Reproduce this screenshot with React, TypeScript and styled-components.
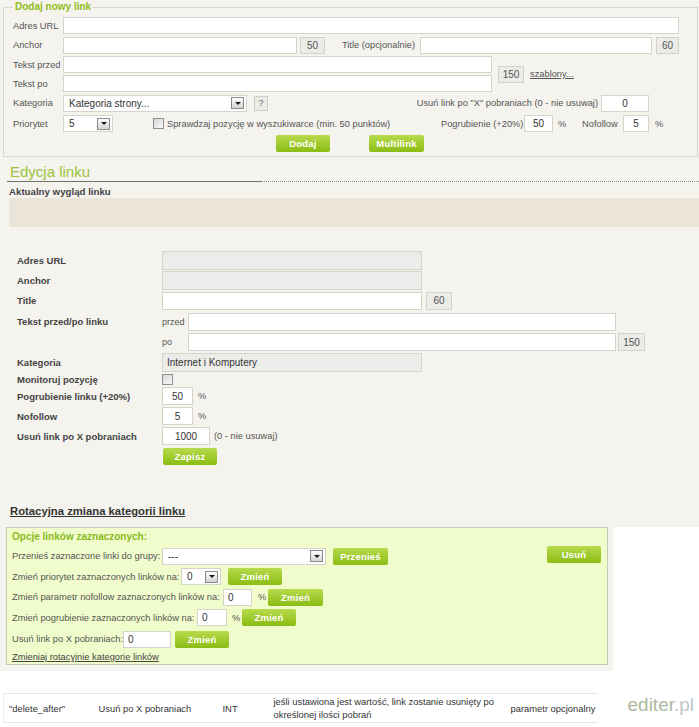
import React from 'react';
import styled, { createGlobalStyle } from 'styled-components';

const FONT = '"Liberation Sans", Arial, Helvetica, sans-serif';

const GlobalStyle = createGlobalStyle`
  * { box-sizing: border-box; }
  html, body { margin: 0; padding: 0; background: #ffffff; }
  body { font-family: ${FONT}; font-size: 9.3px; color: #4a4a4a; }
  input, button { font-family: ${FONT}; }
`;

export default function App() {
  return (
    <Page>
      <GlobalStyle />
      <TopArea>
        <Fieldset>
          <Legend>Dodaj nowy link</Legend>
          <Row $h={19}>
            <FieldLabel>Adres URL</FieldLabel>
            <TextField $w={616} readOnly defaultValue="" />
          </Row>
          <Row $h={20}>
            <FieldLabel>Anchor</FieldLabel>
            <TextField $w={234} readOnly defaultValue="" />
            <Counter $w={25} $ml={3}>50</Counter>
            <TitleLabel>Title (opcjonalnie)</TitleLabel>
            <TextField $w={232} readOnly defaultValue="" />
            <Counter $w={23} $ml={4}>60</Counter>
          </Row>
          <TwinRows>
            <div>
              <Row $h={19}>
                <FieldLabel>Tekst przed</FieldLabel>
                <TextField $w={429} readOnly defaultValue="" />
              </Row>
              <Row $h={19}>
                <FieldLabel>Tekst po</FieldLabel>
                <TextField $w={429} readOnly defaultValue="" />
              </Row>
            </div>
            <Counter $w={26} $ml={6}>150</Counter>
            <TemplatesLink href="#">szablony...</TemplatesLink>
          </TwinRows>
          <Row $h={20}>
            <FieldLabel>Kategoria</FieldLabel>
            <SelectBox $w={184}>
              Kategoria strony...
              <SelectArrow />
            </SelectBox>
            <HelpBox>?</HelpBox>
            <RightText $w={333}>Usuń link po "X" pobraniach (0 - nie usuwaj)</RightText>
            <TextField $w={48} $align="center" readOnly defaultValue="0" />
          </Row>
          <Row $h={21}>
            <FieldLabel>Priorytet</FieldLabel>
            <SelectBox $w={50}>
              5
              <SelectArrow />
            </SelectBox>
            <CheckGroup $w={328}>
              <Checkbox />
              Sprawdzaj pozycję w wyszukiwarce (min. 50 punktów)
            </CheckGroup>
            <FixedText $w={83}>Pogrubienie (+20%)</FixedText>
            <TextField $w={29} $align="center" readOnly defaultValue="50" />
            <FixedText $w={29} $pl={5}>%</FixedText>
            <FixedText $w={41}>Nofollow</FixedText>
            <TextField $w={26} $align="center" readOnly defaultValue="5" />
            <FixedText $w={12} $pl={6}>%</FixedText>
          </Row>
          <Row $h={18} $pl={263}>
            <GreenButton $w={54}>Dodaj</GreenButton>
            <GreenButton $w={55} $ml={39}>Multilink</GreenButton>
          </Row>
        </Fieldset>

        <EditHeading>Edycja linku</EditHeading>
        <HeadingRule />
        <SubHeading>Aktualny wygląd linku</SubHeading>
        <PreviewBox />

        <EditForm>
          <Row $h={20}>
            <FormLabel>Adres URL</FormLabel>
            <TextField $w={260} $h={19} $disabled readOnly defaultValue="" />
          </Row>
          <Row $h={20}>
            <FormLabel>Anchor</FormLabel>
            <TextField $w={260} $h={19} $disabled readOnly defaultValue="" />
          </Row>
          <Row $h={21}>
            <FormLabel>Title</FormLabel>
            <TextField $w={260} $h={18} readOnly defaultValue="" />
            <Counter $w={26} $h={18} $ml={4}>60</Counter>
          </Row>
          <Row $h={21}>
            <FormLabel>Tekst przed/po linku</FormLabel>
            <InlineNote>przed</InlineNote>
            <TextField $w={428} $h={18} readOnly defaultValue="" />
          </Row>
          <Row $h={20}>
            <FormLabel />
            <InlineNote>po</InlineNote>
            <TextField $w={428} $h={18} readOnly defaultValue="" />
            <Counter $w={27} $h={18} $ml={2}>150</Counter>
          </Row>
          <Row $h={20}>
            <FormLabel>Kategoria</FormLabel>
            <TextField $w={260} $h={19} $disabled readOnly defaultValue="Internet i Komputery" />
          </Row>
          <Row $h={14}>
            <FormLabel>Monitoruj pozycję</FormLabel>
            <Checkbox />
          </Row>
          <Row $h={20}>
            <FormLabel>Pogrubienie linku (+20%)</FormLabel>
            <TextField $w={31} $h={18} $align="center" readOnly defaultValue="50" />
            <FixedText $w={14} $pl={5}>%</FixedText>
          </Row>
          <Row $h={20}>
            <FormLabel>Nofollow</FormLabel>
            <TextField $w={31} $h={18} $align="center" readOnly defaultValue="5" />
            <FixedText $w={14} $pl={5}>%</FixedText>
          </Row>
          <Row $h={20}>
            <FormLabel>Usuń link po X pobraniach</FormLabel>
            <TextField $w={48} $h={18} $align="center" readOnly defaultValue="1000" />
            <FixedText $w={80} $pl={4}>(0 - nie usuwaj)</FixedText>
          </Row>
          <Row $h={21} $pl={146}>
            <GreenButton $w={54}>Zapisz</GreenButton>
          </Row>
        </EditForm>

        <RotHeading>Rotacyjna zmiana kategorii linku</RotHeading>
      </TopArea>

      <OptionsArea>
        <OptionsBox>
          <OptionsTitle>Opcje linków zaznaczonych:</OptionsTitle>
          <Row $h={20}>
            <FixedText $w={150}>Przenieś zaznaczone linki do grupy:</FixedText>
            <SelectBox $w={164}>
              ---
              <SelectArrow />
            </SelectBox>
            <GreenButton $w={55} $ml={7}>Przenieś</GreenButton>
            <PushRight>
              <GreenButton $w={54}>Usuń</GreenButton>
            </PushRight>
          </Row>
          <Row $h={21}>
            <FixedText $w={169}>Zmień priorytet zaznaczonych linków na:</FixedText>
            <SelectBox $w={40}>
              0
              <SelectArrow />
            </SelectBox>
            <GreenButton $w={54} $ml={7}>Zmień</GreenButton>
          </Row>
          <Row $h={20}>
            <FixedText $w={211}>Zmień parametr nofollow zaznaczonych linków na:</FixedText>
            <TextField $w={29} readOnly defaultValue="0" />
            <FixedText $w={16} $pl={6}>%</FixedText>
            <GreenButton $w={55}>Zmień</GreenButton>
          </Row>
          <Row $h={21}>
            <FixedText $w={185}>Zmień pogrubienie zaznaczonych linków na:</FixedText>
            <TextField $w={30} readOnly defaultValue="0" />
            <FixedText $w={15} $pl={5}>%</FixedText>
            <GreenButton $w={54}>Zmień</GreenButton>
          </Row>
          <Row $h={22}>
            <FixedText $w={111}>Usuń link po X pobraniach:</FixedText>
            <TextField $w={48} readOnly defaultValue="0" />
            <GreenButton $w={54} $ml={4}>Zmień</GreenButton>
          </Row>
          <Row $h={14}>
            <PlainLink href="#">Zmieniaj rotacyjnie kategorie linków</PlainLink>
          </Row>
        </OptionsBox>
      </OptionsArea>

      <DocArea>
        <DocTable>
          <tbody>
            <tr>
              <DocCell $w={90}>"delete_after"</DocCell>
              <DocCell $w={124}>Usuń po X pobraniach</DocCell>
              <DocCell $w={51}>INT</DocCell>
              <DocCell $w={237}>
                jeśli ustawiona jest wartość, link zostanie usunięty po
                <br />
                określonej ilości pobrań
              </DocCell>
              <DocCell $w={92}>parametr opcjonalny</DocCell>
            </tr>
          </tbody>
        </DocTable>
        <Watermark>
          editer<WatermarkTld>.pl</WatermarkTld>
        </Watermark>
      </DocArea>
    </Page>
  );
}

const Page = styled.div`
  width: 699px;
`;

const TopArea = styled.div`
  background: #f4f3ee;
  padding-bottom: 9px;
  overflow: hidden;
`;

const Fieldset = styled.fieldset`
  margin: 0 1px 0 3px;
  padding: 2px 0 4px 9px;
  border: 1px solid #d8d6cf;
  min-width: 0;
`;

const Legend = styled.legend`
  padding: 0 2px;
  font-size: 10px;
  font-weight: bold;
  line-height: 14px;
  color: #8fbd20;
`;

const Row = styled.div<{ $h: number; $pl?: number }>`
  display: flex;
  align-items: center;
  height: ${p => p.$h}px;
  padding-left: ${p => p.$pl ?? 0}px;
`;

const TwinRows = styled.div`
  display: flex;
  align-items: center;
`;

const FieldLabel = styled.span`
  width: 50px;
  flex: none;
  color: #555;
  white-space: nowrap;
`;

const TitleLabel = styled.span`
  width: 95px;
  flex: none;
  padding-right: 5px;
  text-align: right;
  color: #555;
  white-space: nowrap;
`;

const TextField = styled.input<{
  $w: number;
  $h?: number;
  $align?: 'left' | 'center';
  $disabled?: boolean;
}>`
  width: ${p => p.$w}px;
  height: ${p => p.$h ?? 17}px;
  flex: none;
  margin: 0;
  padding: 0 4px;
  border: 1px solid #d6d3cb;
  background: ${p => (p.$disabled ? '#ececea' : '#ffffff')};
  font-size: 10px;
  color: #333;
  text-align: ${p => p.$align ?? 'left'};
  outline: none;
`;

const Counter = styled.span<{ $w: number; $h?: number; $ml?: number }>`
  display: inline-flex;
  align-items: center;
  justify-content: center;
  width: ${p => p.$w}px;
  height: ${p => p.$h ?? 17}px;
  margin-left: ${p => p.$ml ?? 0}px;
  flex: none;
  background: #ebebe8;
  border: 1px solid #d4d2cb;
  font-size: 10px;
  color: #555;
`;

const TemplatesLink = styled.a`
  margin-left: 6px;
  color: #555;
  text-decoration: underline;
`;

const SelectBox = styled.div<{ $w: number }>`
  display: flex;
  align-items: center;
  width: ${p => p.$w}px;
  height: 17px;
  flex: none;
  padding: 0 2px 0 5px;
  border: 1px solid #d6d3cb;
  background: #ffffff;
  font-size: 10px;
  color: #333;
  white-space: nowrap;
`;

const SelectArrow = styled.span`
  display: flex;
  align-items: center;
  justify-content: center;
  margin-left: auto;
  width: 13px;
  height: 12px;
  flex: none;
  border: 1px solid #8a8a8a;
  background: linear-gradient(#fefefe, #d4d4d4);
  &::after {
    content: '';
    border-left: 3px solid transparent;
    border-right: 3px solid transparent;
    border-top: 3px solid #1a1a1a;
  }
`;

const HelpBox = styled.span`
  display: inline-flex;
  align-items: center;
  justify-content: center;
  width: 14px;
  height: 15px;
  margin-left: 7px;
  flex: none;
  background: #ecebe6;
  border: 1px solid #cfcdc6;
  font-size: 9px;
  color: #666;
`;

const RightText = styled.span<{ $w: number }>`
  width: ${p => p.$w}px;
  flex: none;
  padding-right: 3px;
  text-align: right;
  color: #555;
  white-space: nowrap;
`;

const CheckGroup = styled.label<{ $w: number }>`
  display: flex;
  align-items: center;
  gap: 3px;
  width: ${p => p.$w}px;
  flex: none;
  padding-left: 40px;
  color: #555;
  white-space: nowrap;
`;

const Checkbox = styled.span`
  width: 11px;
  height: 11px;
  flex: none;
  border: 1px solid #8f8f8f;
  background: linear-gradient(135deg, #d6d6d6 0%, #fafafa 100%);
`;

const FixedText = styled.span<{ $w: number; $pl?: number }>`
  width: ${p => p.$w}px;
  flex: none;
  padding-left: ${p => p.$pl ?? 0}px;
  color: #555;
  white-space: nowrap;
`;

const GreenButton = styled.button<{ $w: number; $ml?: number }>`
  width: ${p => p.$w}px;
  height: 17px;
  flex: none;
  margin: 0 0 0 ${p => p.$ml ?? 0}px;
  padding: 0;
  border: 0;
  border-radius: 2px;
  background: linear-gradient(#b7db4d, #8bbc13);
  color: #ffffff;
  font-size: 9.5px;
  font-weight: bold;
  letter-spacing: 0.2px;
  cursor: pointer;
`;

const EditHeading = styled.h2`
  margin: 6px 0 0;
  padding-left: 10px;
  font-size: 15px;
  font-weight: normal;
  line-height: 17px;
  color: #9ac33b;
`;

const HeadingRule = styled.div`
  display: flex;
  margin: 1px 0 0 7px;
  &::before {
    content: '';
    width: 254px;
    border-top: 1px solid #707070;
  }
  &::after {
    content: '';
    flex: 1;
    border-top: 1px dotted #8a8a8a;
  }
`;

const SubHeading = styled.div`
  margin: 4px 0 0 9px;
  font-size: 9.7px;
  font-weight: bold;
  line-height: 12px;
  color: #444;
`;

const PreviewBox = styled.div`
  height: 29px;
  margin-left: 9px;
  background: #ebe4d8;
`;

const EditForm = styled.div`
  margin-top: 23px;
  padding-left: 17px;
`;

const FormLabel = styled.span`
  width: 145px;
  flex: none;
  font-size: 9.5px;
  font-weight: bold;
  color: #444;
  white-space: nowrap;
`;

const InlineNote = styled.span`
  width: 26px;
  flex: none;
  font-size: 9px;
  color: #555;
`;

const RotHeading = styled.div`
  margin: 37px 0 0 10px;
  font-size: 11.3px;
  font-weight: bold;
  line-height: 14px;
  color: #333;
  text-decoration: underline;
`;

const OptionsArea = styled.div`
  width: 613px;
  padding: 0 5px 6px 6px;
  background: #f4f3ee;
`;

const OptionsBox = styled.div`
  height: 138px;
  padding: 2px 6px 0 5px;
  border: 1px solid #c6cab5;
  background: #f1fccc;
`;

const OptionsTitle = styled.div`
  height: 16px;
  line-height: 14px;
  font-size: 10px;
  font-weight: bold;
  color: #8ab920;
`;

const PushRight = styled.div`
  margin-left: auto;
  align-self: flex-start;
`;

const PlainLink = styled.a`
  color: #444;
  text-decoration: underline;
`;

const DocArea = styled.div`
  display: flex;
  align-items: center;
  margin-top: 22px;
  padding-left: 3px;
`;

const DocTable = styled.table`
  width: 594px;
  table-layout: fixed;
  border-collapse: collapse;
  border-top: 1px solid #e6e6e6;
  border-bottom: 1px solid #e6e6e6;
  border-left: 1px solid #eeeeee;
  font-size: 9.4px;
  color: #333;
`;

const DocCell = styled.td<{ $w: number }>`
  width: ${p => p.$w}px;
  height: 29px;
  padding: 0 0 0 5px;
  line-height: 13px;
  vertical-align: middle;
  white-space: nowrap;
`;

const Watermark = styled.div`
  margin: -6px 0 0 30px;
  font-size: 19px;
  color: #aeb8a0;
`;

const WatermarkTld = styled.span`
  color: #bcc6cd;
`;
